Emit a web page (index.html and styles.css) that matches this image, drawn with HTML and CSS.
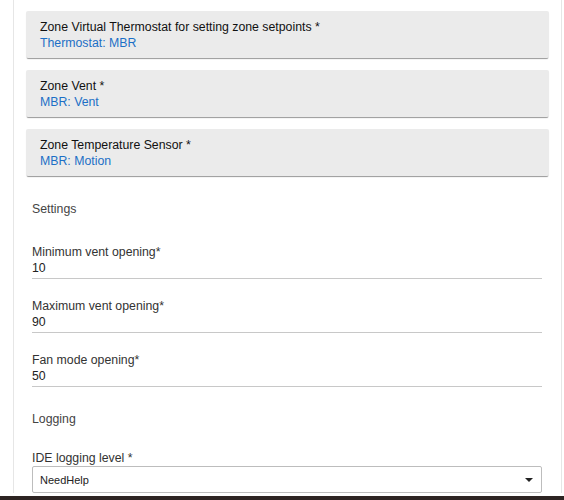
FILE: index.html
```html
<!DOCTYPE html>
<html lang="en">
<head>
    <meta charset="UTF-8">
    <meta name="viewport" content="width=device-width, initial-scale=1.0">
    <title>Zone Settings</title>
    <link rel="stylesheet" href="styles.css">
</head>
<body>
    <div class="page">
        <!-- Device pickers -->
        <div class="card">
            <div class="card-title">Zone Virtual Thermostat for setting zone setpoints *</div>
            <div class="card-value">Thermostat: MBR</div>
        </div>
        <div class="card">
            <div class="card-title">Zone Vent *</div>
            <div class="card-value">MBR: Vent</div>
        </div>
        <div class="card">
            <div class="card-title">Zone Temperature Sensor *</div>
            <div class="card-value">MBR: Motion</div>
        </div>

        <!-- Settings -->
        <div class="section">
            <div class="section-title">Settings</div>
            <div class="field">
                <div class="field-label">Minimum vent opening*</div>
                <div class="field-value">10</div>
            </div>
            <div class="field">
                <div class="field-label">Maximum vent opening*</div>
                <div class="field-value">90</div>
            </div>
            <div class="field">
                <div class="field-label">Fan mode opening*</div>
                <div class="field-value">50</div>
            </div>
        </div>

        <!-- Logging -->
        <div class="section">
            <div class="section-title logging">Logging</div>
            <div class="field-label">IDE logging level *</div>
            <div class="select">
                <span>NeedHelp</span>
                <span class="arrow"></span>
            </div>
        </div>
    </div>
    <div class="taskbar"></div>
</body>
</html>
```
FILE: styles.css
```css
body {
    margin: 0;
    font-family: "Liberation Sans", Arial, sans-serif;
    background-color: white;
    color: #222;
    overflow: hidden;
}

.page {
    margin: 0 2px 0 13px;
    padding: 11px 12px 0;
    border-left: 1px solid #e6e6e6;
    border-right: 1px solid #e6e6e6;
}

.card {
    background-color: #ebebeb;
    border-radius: 2px;
    padding: 8px 14px 7px;
    margin-bottom: 12px;
    box-shadow: 0 2px 1px -1px rgba(0, 0, 0, 0.35), 0 1px 1px rgba(0, 0, 0, 0.08);
    font-size: 12.3px;
    line-height: 16px;
}

.card-title {
    color: #111;
}

.card-value {
    color: #1c6fc6;
}

.section {
    margin: 0 7px 0 6px;
    font-size: 12.3px;
    line-height: 16px;
}

.section-title {
    color: #444;
    margin-top: 25px;
    margin-bottom: 27px;
}

.section-title.logging {
    margin-top: 24px;
    margin-bottom: 23px;
}

.field {
    border-bottom: 1px solid #c8c8c8;
    padding-bottom: 2px;
    margin-bottom: 19px;
}

.field:last-child {
    margin-bottom: 0;
}

.field-label {
    color: #333;
}

.field-value {
    color: #222;
}

.select {
    display: flex;
    justify-content: space-between;
    align-items: center;
    height: 25px;
    border: 1px solid #bdbdbd;
    border-radius: 2px;
    padding: 0 8px 0 7px;
    font-size: 11px;
    color: #222;
}

.arrow {
    width: 0;
    height: 0;
    border-left: 4px solid transparent;
    border-right: 4px solid transparent;
    border-top: 4px solid #222;
}

.taskbar {
    margin-top: 3px;
    height: 20px;
    background-color: #2d2422;
}
```
